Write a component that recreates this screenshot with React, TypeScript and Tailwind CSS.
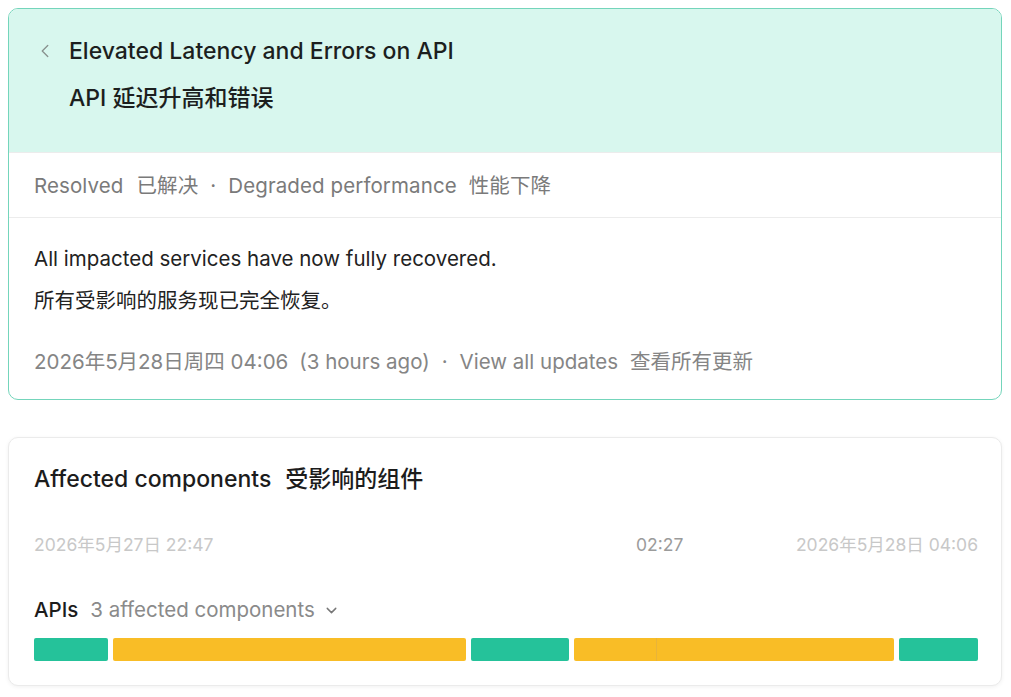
import React from 'react';
import { ChevronLeft, ChevronDown } from 'lucide-react';

interface Segment {
    size: number;
    status: 'ok' | 'degraded';
    joined?: boolean;
}

const segments: Segment[] = [
    { size: 74, status: 'ok' },
    { size: 354, status: 'degraded' },
    { size: 98, status: 'ok' },
    { size: 82, status: 'degraded' },
    { size: 238, status: 'degraded', joined: true },
    { size: 79, status: 'ok' },
];

export default function App() {
    const font = { fontFamily: 'Inter, "Noto Sans CJK SC", sans-serif' };

    return (
        <div className="min-h-screen bg-white px-2 pt-2 pb-3" style={font}>
            {/* incident card */}
            <div className="w-[994px] rounded-[10px] border border-[#74d5bb] overflow-hidden bg-white">
                <div className="h-[143px] bg-[#d8f7ee] pt-[26px] flex flex-col gap-[15px]">
                    <div className="flex items-center h-8">
                        <div className="w-[60px] flex justify-end pr-[13px]">
                            <ChevronLeft size={22} strokeWidth={1.5} className="text-[#8a9490]" />
                        </div>
                        <h1 className="text-[23px] leading-8 text-[#1c1f1e] font-medium">Elevated Latency and Errors on API</h1>
                    </div>
                    <div className="pl-[60px] h-8 flex items-center">
                        <span className="text-[23px] leading-8 text-[#1c1f1e] font-medium">API 延迟升高和错误</span>
                    </div>
                </div>

                <div className="h-[66px] pt-[3px] flex items-center px-[25px] border-t border-b border-[#ececec] text-[20.5px] tracking-[0.1px] text-[#7a7a7a]">
                    <span>Resolved</span>
                    <span className="ml-[13px]">已解决</span>
                    <span className="mx-[12px]">·</span>
                    <span>Degraded performance</span>
                    <span className="ml-[12px]">性能下降</span>
                </div>

                <div className="px-[25px] pt-[27px] pb-[23px] text-[20.5px]">
                    <p className="leading-7 text-[#222]">All impacted services have now fully recovered.</p>
                    <p className="leading-7 text-[#222] mt-[14px]">所有受影响的服务现已完全恢复。</p>
                    <div className="leading-7 mt-[33px] text-[#858585] flex items-center">
                        <span>2026年5月28日周四 04:06</span>
                        <span className="ml-[11px]">(3 hours ago)</span>
                        <span className="mx-[12px]">·</span>
                        <span>View all updates</span>
                        <span className="ml-[12px]">查看所有更新</span>
                    </div>
                </div>
            </div>

            {/* affected components */}
            <div className="w-[994px] mt-[37px] rounded-[10px] border border-[#ebebeb] bg-white shadow-[0_1px_4px_rgba(0,0,0,0.06)] pl-[25px] pr-[23px] pt-[25px] pb-[24px]">
                <h2 className="text-[23px] leading-8 text-[#1c1c1c] font-medium">
                    Affected components<span className="ml-[14px]">受影响的组件</span>
                </h2>

                <div className="mt-[38px] h-6 flex items-center text-[17.5px]">
                    <span className="w-[602px] text-[#c8c8c8]">2026年5月27日 22:47</span>
                    <span className="text-[#9b9b9b]">02:27</span>
                    <span className="flex-1 text-right text-[#c8c8c8]">2026年5月28日 04:06</span>
                </div>

                <div className="mt-[39px] h-7 flex items-center text-[20.5px]">
                    <span className="text-[#1c1c1c] font-medium">APIs</span>
                    <span className="ml-[12px] text-[#8a8a8a]">3 affected components</span>
                    <ChevronDown size={17} strokeWidth={2} className="ml-[8px] text-[#777]" />
                </div>

                <div className="mt-[14px] h-[23px] flex">
                    {segments.map((s, i) => (
                        <div
                            key={i}
                            className={`h-full rounded-[2px] ${s.status === 'ok' ? 'bg-[#25c29a]' : 'bg-[#f9bd26]'} ${
                                i > 0 && !s.joined ? 'ml-[5px]' : ''
                            } ${s.joined ? 'border-l border-[#e8b43a] rounded-l-none' : ''} ${
                                segments[i + 1]?.joined ? 'rounded-r-none' : ''
                            }`}
                            style={{ flexGrow: s.size, flexBasis: 0 }}
                        />
                    ))}
                </div>
            </div>
        </div>
    );
}
